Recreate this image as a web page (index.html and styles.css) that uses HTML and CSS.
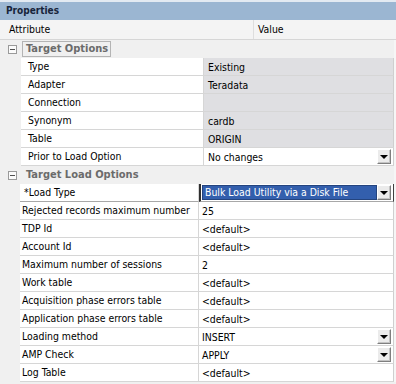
FILE: index.html
```html
<!DOCTYPE html>
<html>
<head>
<meta charset="utf-8">
<link rel="stylesheet" href="styles.css">
</head>
<body>
<div class="panel">
  <div class="title">Properties</div>
  <div class="head"><span class="h-attr">Attribute</span><span class="h-val">Value</span></div>
  <div class="grid">
    <div class="group"><span class="toggle"></span><span class="glabel focus">Target Options</span></div>
    <div class="row g1"><div class="gut"></div><div class="attr">Type</div><div class="val ro">Existing</div></div>
    <div class="row g1"><div class="gut"></div><div class="attr">Adapter</div><div class="val ro">Teradata</div></div>
    <div class="row g1"><div class="gut"></div><div class="attr">Connection</div><div class="val ro"></div></div>
    <div class="row g1"><div class="gut"></div><div class="attr">Synonym</div><div class="val ro">cardb</div></div>
    <div class="row g1"><div class="gut"></div><div class="attr">Table</div><div class="val ro">ORIGIN</div></div>
    <div class="row g1"><div class="gut"></div><div class="attr">Prior to Load Option</div><div class="val"><span class="txt">No changes</span><span class="dd"><i class="tri"></i></span></div></div>
    <div class="group"><span class="toggle"></span><span class="glabel">Target Load Options</span></div>
    <div class="row g2 active"><div class="gut"></div><div class="attr">*Load Type</div><div class="val edit"><span class="selbox">Bulk Load Utility via a Disk File</span><span class="dd"><i class="tri"></i></span></div></div>
    <div class="row g2"><div class="gut"></div><div class="attr">Rejected records maximum number</div><div class="val">25</div></div>
    <div class="row g2"><div class="gut"></div><div class="attr">TDP Id</div><div class="val">&lt;default&gt;</div></div>
    <div class="row g2"><div class="gut"></div><div class="attr">Account Id</div><div class="val">&lt;default&gt;</div></div>
    <div class="row g2"><div class="gut"></div><div class="attr">Maximum number of sessions</div><div class="val">2</div></div>
    <div class="row g2"><div class="gut"></div><div class="attr">Work table</div><div class="val">&lt;default&gt;</div></div>
    <div class="row g2"><div class="gut"></div><div class="attr">Acquisition phase errors table</div><div class="val">&lt;default&gt;</div></div>
    <div class="row g2"><div class="gut"></div><div class="attr">Application phase errors table</div><div class="val">&lt;default&gt;</div></div>
    <div class="row g2"><div class="gut"></div><div class="attr">Loading method</div><div class="val"><span class="txt">INSERT</span><span class="dd"><i class="tri"></i></span></div></div>
    <div class="row g2"><div class="gut"></div><div class="attr">AMP Check</div><div class="val"><span class="txt">APPLY</span><span class="dd"><i class="tri"></i></span></div></div>
    <div class="row g2"><div class="gut"></div><div class="attr">Log Table</div><div class="val">&lt;default&gt;</div></div>
  </div>
</div>
</body>
</html>
```

FILE: styles.css
```css
html, body {
  margin: 0;
  padding: 0;
  background: #f0f0f0;
}
.panel {
  width: 396px;
  height: 384px;
  overflow: hidden;
  font: 10.4px "DejaVu Sans Condensed", "Liberation Sans", Arial, sans-serif;
  color: #000;
  background: #f0f0f0;
}
.title {
  height: 20px;
  box-sizing: border-box;
  border-top: 2px solid #e3eaf2;
  background: #9bb6d2;
  color: #17243a;
  font-weight: bold;
  font-size: 10px;
  padding-left: 6px;
  line-height: 18px;
}
.head {
  height: 20px;
  box-sizing: border-box;
  display: flex;
  background: #f4f4f4;
  border-bottom: 1px solid #d6d6d6;
  line-height: 19px;
}
.h-attr {
  width: 254px;
  box-sizing: border-box;
  padding-left: 9px;
  border-right: 1px solid #dedede;
}
.h-val {
  padding-left: 4px;
}
.grid {
  padding-right: 2px;
  background: #f6f6f6;
}
.group {
  height: 18px;
  display: flex;
  align-items: center;
  background: #f0f0f0;
}
.toggle {
  position: relative;
  width: 9px;
  height: 9px;
  box-sizing: border-box;
  margin-left: 8px;
  border: 1px solid #9a9a9a;
  background: #fbfbfb;
}
.toggle::after {
  content: "";
  position: absolute;
  left: 1px;
  top: 3px;
  width: 5px;
  height: 1px;
  background: #505050;
}
.glabel {
  font-weight: bold;
  font-size: 11px;
  color: #6b6b6b;
  padding: 0 2px 0 3px;
  line-height: 14px;
  border: 1px solid transparent;
  margin-left: 5px;
}
.glabel.focus {
  border-color: #b4b4b4;
}
.row {
  height: 18px;
  display: flex;
}
.gut {
  width: 21px;
  flex: none;
  background: #f0f0f0;
}
.attr {
  width: 183px;
  flex: none;
  box-sizing: border-box;
  background: #fff;
  border-bottom: 1px solid #d6d6d6;
  border-right: 1px solid #d6d6d6;
  padding-left: 7px;
  line-height: 17px;
  white-space: nowrap;
  overflow: hidden;
}
.val {
  flex: 1;
  box-sizing: border-box;
  display: flex;
  align-items: center;
  background: #fff;
  border-bottom: 1px solid #d6d6d6;
  border-right: 1px solid #cfcfcf;
  padding-left: 4px;
  white-space: nowrap;
}
.val.ro {
  background: #dfdfe2;
}
.g2 .gut {
  width: 20px;
}
.g2 .attr {
  width: 179px;
  padding-left: 2px;
}
.g2 .val {
  padding-left: 3px;
}
.active .attr {
  border-bottom-color: #a8a8a8;
  padding-left: 4px;
}
.val.edit {
  padding-left: 0;
  border-left: 2px solid #303030;
  border-right: 1px solid #404040;
  border-bottom-color: #a8a8a8;
}
.selbox {
  width: 175px;
  height: 15px;
  box-sizing: border-box;
  margin-left: 1px;
  padding-left: 2px;
  line-height: 13px;
  background: #335fad;
  border: 1px solid #24447e;
  color: #fff;
}
.dd {
  width: 14px;
  height: 15px;
  box-sizing: border-box;
  margin-left: auto;
  margin-right: 2px;
  display: flex;
  align-items: center;
  justify-content: center;
  background: #ebebeb;
  border: 1px solid;
  border-color: #ffffff #7f7f7f #7f7f7f #ffffff;
  box-shadow: inset -1px -1px 0 #c4c4c4;
}
.tri {
  width: 0;
  height: 0;
  border-left: 4px solid transparent;
  border-right: 4px solid transparent;
  border-top: 4px solid #000;
  margin-top: 1px;
}
```
